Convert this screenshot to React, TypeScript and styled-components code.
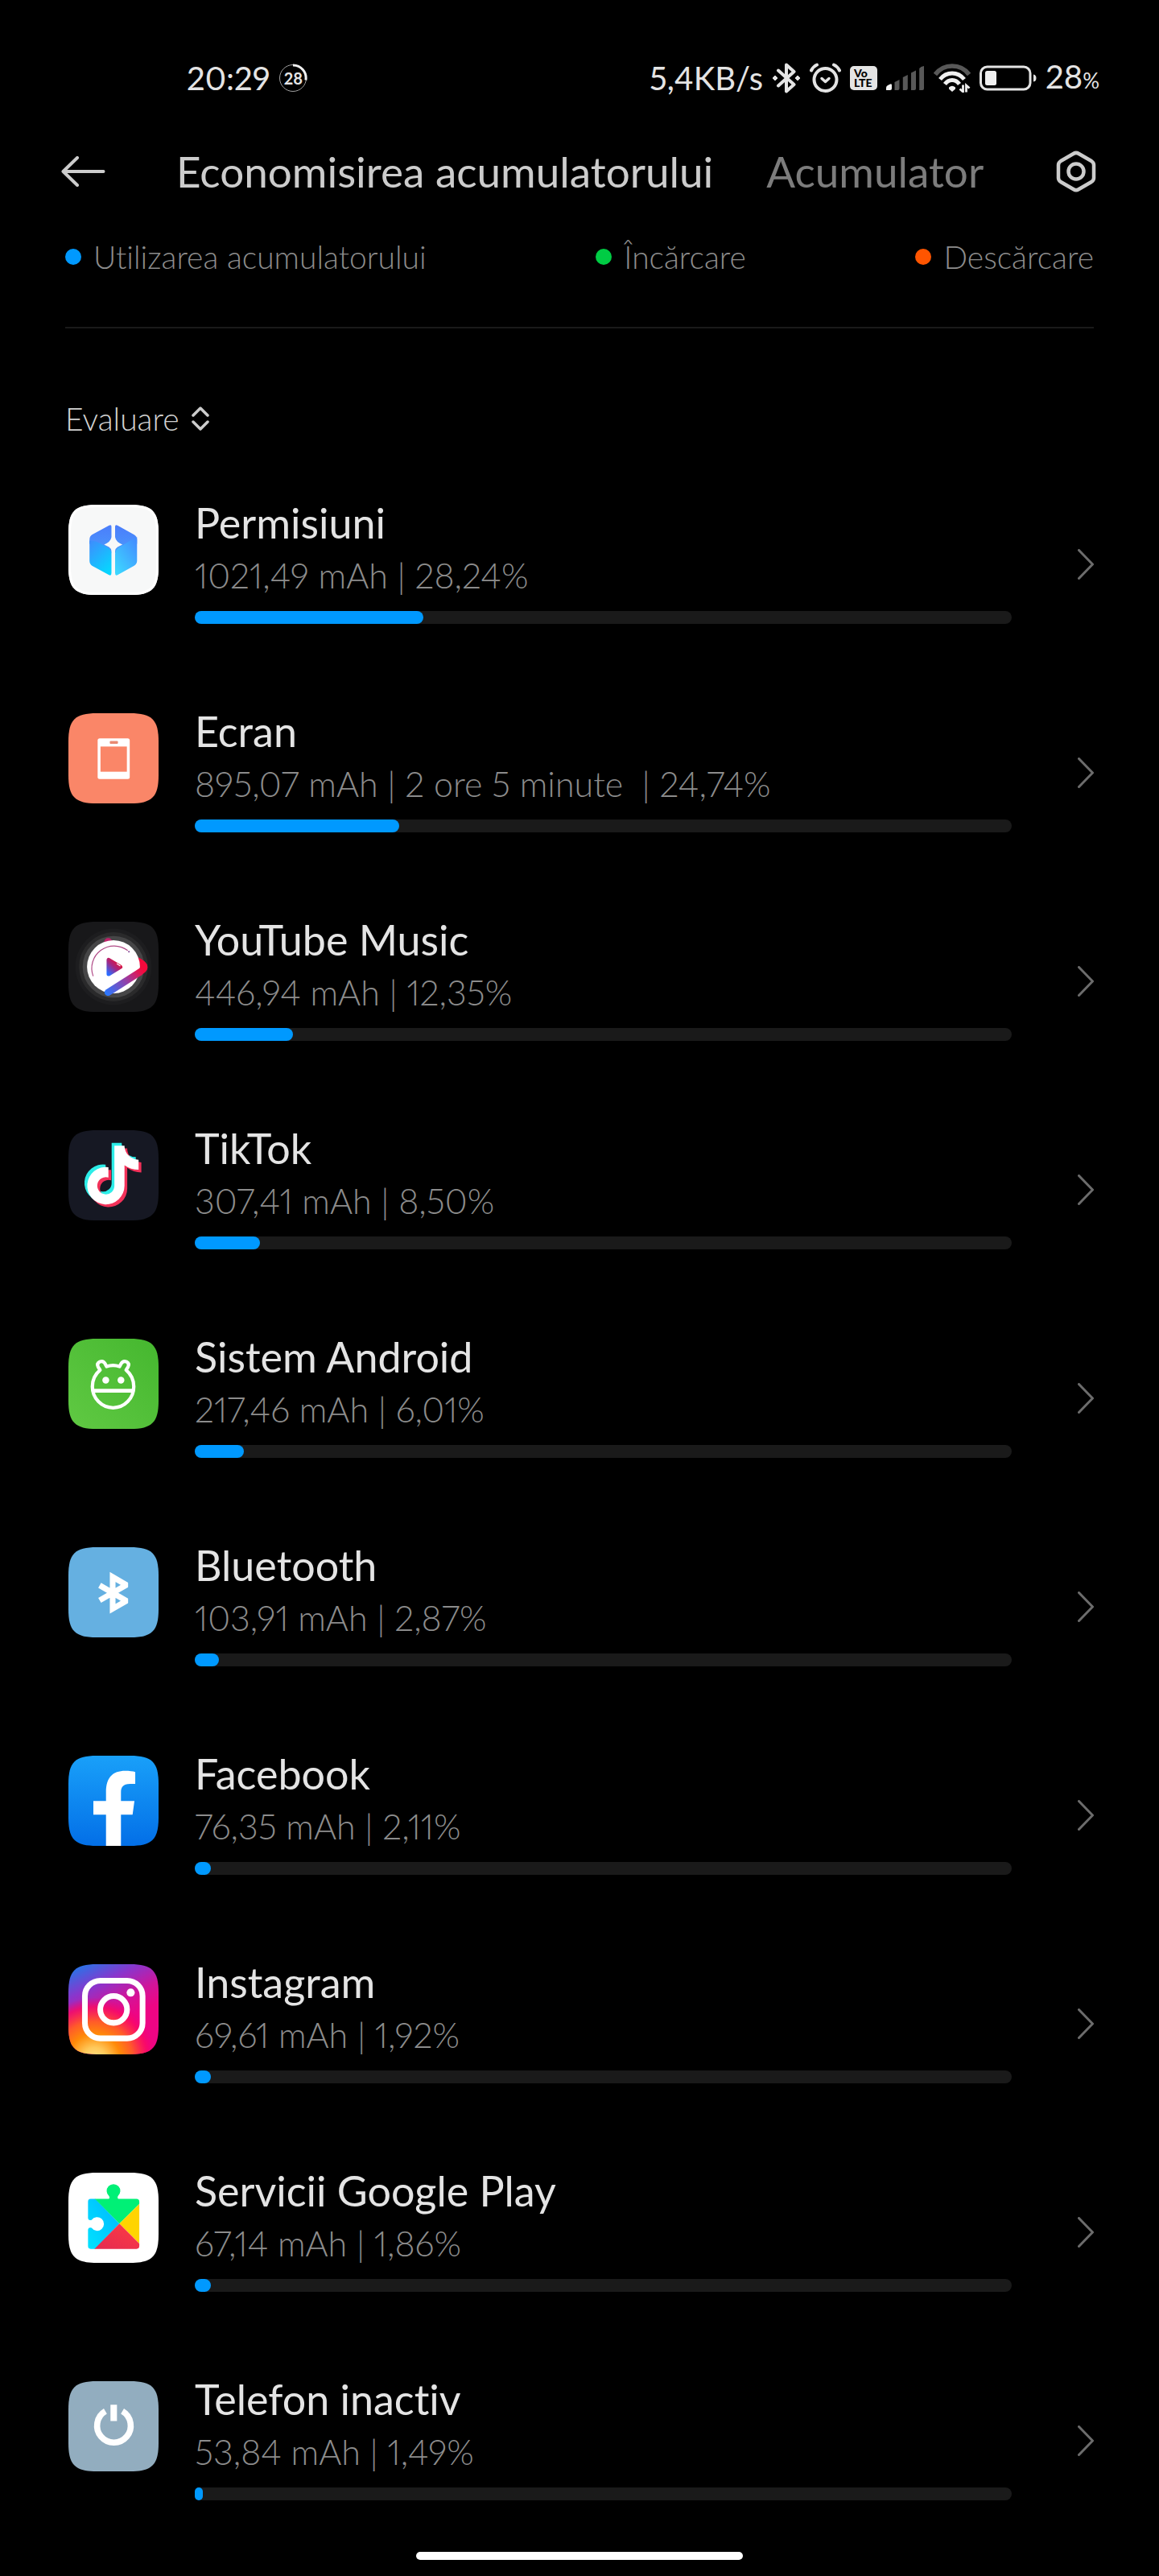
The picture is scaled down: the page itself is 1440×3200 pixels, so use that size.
import React, { ReactNode } from 'react';
import styled, { createGlobalStyle } from 'styled-components';

const GlobalStyle = createGlobalStyle`
  * { box-sizing: border-box; }
  body {
    margin: 0;
    background: #000;
    color: #e4e4e4;
    font-family: Lato, "Open Sans", sans-serif;
    font-variant-ligatures: none;
    font-variant-numeric: proportional-nums;
  }
  button, a { color: inherit; font: inherit; text-decoration: none; }
  button { padding: 0; border: 0; background: none; cursor: pointer; }
  svg { display: block; flex: none; }
`;

const Screen = styled.div`
  display: flex;
  flex-direction: column;
  min-height: 100vh;
  background: #000;
`;

const StatusBar = styled.div`
  display: flex;
  align-items: center;
  justify-content: space-between;
  height: 144px;
  padding: 50px 74px 0 232px;
  font-size: 40px;
  line-height: 48px;
`;

const StatusGroup = styled.div`
  display: flex;
  align-items: center;
  gap: 11px;
  white-space: nowrap;
`;

const Ring = styled.span`
  display: grid;
  place-items: center;
  font-size: 20px;
  line-height: 24px;
  font-weight: 700;
  > * { grid-area: 1 / 1; }
`;

const Level = styled.span`
  small { font-size: 26px; }
`;

const Header = styled.header`
  display: flex;
  align-items: center;
  height: 138px;
  padding: 0 78px 0 76px;
`;

const Tabs = styled.div`
  display: flex;
  flex: 1;
  gap: 66px;
  margin-left: 88px;
`;

const Tab = styled.button<{ $active?: boolean }>`
  font-size: 53px;
  line-height: 64px;
  white-space: nowrap;
  color: ${(p) => (p.$active ? '#cccccc' : '#7c7c7c')};
`;

const Main = styled.main`
  display: flex;
  flex-direction: column;
  padding: 13px 81px 0;
`;

const Legend = styled.ul`
  display: flex;
  justify-content: space-between;
  margin: 0;
  padding: 0 0 63px;
  border-bottom: 2px solid #1a1a1a;
  list-style: none;
  font-size: 39px;
  line-height: 48px;
  font-weight: 300;
  color: #8c8c8c;
`;

const LegendItem = styled.li`
  display: flex;
  align-items: center;
  gap: 15px;
`;

const Dot = styled.span<{ $color: string }>`
  width: 20px;
  height: 20px;
  border-radius: 50%;
  background: ${(p) => p.$color};
`;

const SortButton = styled.button`
  display: flex;
  align-items: center;
  align-self: flex-start;
  gap: 15px;
  margin: 88px 0 83px;
  font-size: 39px;
  line-height: 48px;
  font-weight: 300;
  color: #d2d2d2;
`;

const AppList = styled.ul`
  display: flex;
  flex-direction: column;
  gap: 111px;
  margin: 0;
  padding: 0;
  list-style: none;
`;

const AppRow = styled.a`
  display: flex;
  align-items: center;
  padding-left: 4px;
`;

const IconBox = styled.span`
  align-self: flex-start;
  margin-right: 45px;
`;

const Details = styled.div`
  display: flex;
  flex: 1;
  flex-direction: column;
  gap: 18px;
  margin-right: 82px;
`;

const Name = styled.span`
  font-size: 52px;
  line-height: 44px;
`;

const Usage = styled.span`
  font-size: 43px;
  line-height: 52px;
  font-weight: 300;
  color: #8c8c8c;
  white-space: pre;
`;

const Track = styled.div`
  height: 16px;
  border-radius: 8px;
  background: #1a1a1a;
`;

const Fill = styled.div`
  height: 16px;
  border-radius: 8px;
  background: #0099ff;
`;

const HomeBar = styled.div`
  align-self: center;
  width: 28.2%;
  height: 10px;
  margin: 64px 0 20px;
  border-radius: 5px;
  background: #fff;
`;

const SQUIRCLE =
  'M0 35C0 8 8 0 35 0H76C103 0 111 8 111 35V76C111 103 103 111 76 111H35C8 111 0 103 0 76Z';

const Squircle = ({ id, fill, children }: { id: string; fill: string; children: ReactNode }) => (
  <svg width="112" height="112" viewBox="0 0 111 111" aria-hidden="true">
    <clipPath id={`${id}-clip`}>
      <path d={SQUIRCLE} />
    </clipPath>
    <g clipPath={`url(#${id}-clip)`}>
      <rect width="111" height="111" fill={fill} />
      {children}
    </g>
  </svg>
);

const PermissionsIcon = () => (
  <Squircle id="perm" fill="#f7f8f8">
    <defs>
      <linearGradient id="permTop" x1="0" y1="0" x2="0" y2="1">
        <stop offset="0" stopColor="#4b7dfb" />
        <stop offset="1" stopColor="#4a9afc" />
      </linearGradient>
      <linearGradient id="permLeft" x1="0" y1="0" x2="0.6" y2="1">
        <stop offset="0" stopColor="#3f8bfd" />
        <stop offset="1" stopColor="#08d4ff" />
      </linearGradient>
      <linearGradient id="permRight" x1="1" y1="0" x2="0.2" y2="1">
        <stop offset="0" stopColor="#4488ff" />
        <stop offset="1" stopColor="#3cd6ff" />
      </linearGradient>
    </defs>
    <path d={SQUIRCLE} fill="none" stroke="#fff" strokeWidth="6" />
    <path d="M53 27Q53 24 50 25.500L29 37Q26 39 26 43V48L53 60V57Q53 54 50 52L44 49Q52 46 53 40Z" fill="url(#permTop)" />
    <path d="M57.500 27Q57.500 24 60.500 25.500L81 37Q84.500 39 84.500 43V48L57.500 60V57Q57.500 54 60.500 52L66.500 49Q58.500 46 57.500 40Z" fill="url(#permTop)" />
    <path d="M26 44Q33 44 38 47L49 53Q53 56 53 61V84Q53 88 50 86.500L29 75Q26 73 26 69Z" fill="url(#permLeft)" />
    <path d="M84.500 40Q79 42 73 46L61.500 53Q57.500 56 57.500 61V84Q57.500 88 60.500 86.500L81 75Q84.500 73 84.500 69Z" fill="url(#permRight)" />
  </Squircle>
);

const DisplayIcon = () => (
  <Squircle id="disp" fill="#fa8668">
    <rect x="36" y="31" width="39.500" height="50" rx="2.500" fill="#fff" />
    <rect x="39.500" y="41" width="32.500" height="31" fill="#fa8668" />
    <rect x="51" y="34.300" width="10" height="3.400" rx="1" fill="#e98a72" />
  </Squircle>
);

const MusicIcon = () => (
  <Squircle id="music" fill="#18181a">
    <defs>
      <linearGradient id="musicBand" gradientUnits="userSpaceOnUse" x1="46" y1="88" x2="92" y2="52">
        <stop offset="0" stopColor="#2b78ff" />
        <stop offset="0.500" stopColor="#9340a8" />
        <stop offset="0.850" stopColor="#e8114c" />
        <stop offset="1" stopColor="#fb0638" />
      </linearGradient>
      <linearGradient id="musicPlay" x1="0" y1="1" x2="0.700" y2="0.100">
        <stop offset="0" stopColor="#2b6cff" />
        <stop offset="0.600" stopColor="#a5257f" />
        <stop offset="1" stopColor="#dc1541" />
      </linearGradient>
    </defs>
    <circle cx="55.500" cy="55.500" r="47" fill="#1d1d1f" />
    <circle cx="55.500" cy="55.500" r="42.500" fill="#2a2a2b" />
    <circle cx="55.500" cy="55.500" r="38" fill="#464647" />
    <circle cx="49" cy="25" r="5" fill="#c0216a" />
    <path d="M83 47L90 51.500Q97 56 90 60.500L84 64" fill="none" stroke="#f20a3e" strokeWidth="8" />
    <circle cx="55.500" cy="55.500" r="32.600" fill="#fff" />
    <path d="M87 44L93.500 48.500Q101 55.500 93.500 62.500L86 67L84 60Q88 58 89 55Q89 50 87 44Z" fill="#f50a3c" />
    <path d="M48.700 87L88 62" fill="none" stroke="url(#musicBand)" strokeWidth="8.500" strokeLinecap="round" />
    <path d="M30.500 67A27.500 27.500 0 0 1 73 35.500" fill="none" stroke="#b04a86" strokeWidth="1.200" />
    <circle cx="74.500" cy="37" r="1" fill="#7a3d90" />
    <path d="M49.500 47V64.500L64 55.700Z" fill="url(#musicPlay)" stroke="url(#musicPlay)" strokeWidth="5" strokeLinejoin="round" />
    <path d="M59.500 51.500L64 54.500" stroke="#fff" strokeWidth="1" />
  </Squircle>
);

const NOTE =
  'M448,209.910a210.060,210.060,0,0,1-122.770-39.250V349.380A162.550,162.550,0,1,1,185,188.310V278.200a74.620,74.620,0,1,0,52.230,71.180V0l88,0a121.180,121.180,0,0,0,1.860,22.170h0A122.180,122.180,0,0,0,381,102.390a121.430,121.430,0,0,0,67,20.140Z';

const TikTokIcon = () => (
  <Squircle id="tiktok" fill="#161823">
    <path d={NOTE} transform="translate(19.700 15.700) scale(.1413)" fill="#2dede8" />
    <path d={NOTE} transform="translate(26.500 22.300) scale(.1413)" fill="#f23159" />
    <path d={NOTE} transform="translate(23.100 19) scale(.1413)" fill="#fff" />
  </Squircle>
);

const AndroidIcon = () => (
  <Squircle id="android" fill="url(#androidBg)">
    <defs>
      <linearGradient id="androidBg" x1="0" y1="1" x2="1" y2="0">
        <stop offset="0" stopColor="#60c943" />
        <stop offset="1" stopColor="#45b72f" />
      </linearGradient>
    </defs>
    <g fill="none" stroke="#fff" strokeWidth="4.200" strokeLinejoin="round">
      <path d="M39 38.500L36.600 34.800Q34.500 30.500 38.600 28.400Q42.800 26.600 45 30.500L47 34.300Q55 31.500 63 34.300L65 30.500Q67.500 26.600 71.600 28.400Q75.500 30.500 73.400 34.800L71 38.500Q80.500 46.500 80.500 59A25.500 26 0 0 1 29.500 59Q29.500 46.500 39 38.500Z" />
      <path d="M30 64H80" strokeWidth="4.800" />
    </g>
    <circle cx="46" cy="51" r="4.200" fill="#fff" />
    <circle cx="64.700" cy="51" r="4.200" fill="#fff" />
  </Squircle>
);

const BluetoothIcon = () => (
  <Squircle id="bt" fill="#65b0e1">
    <svg width="73.500" height="111">
      <path
        d="M38.500 47L71.500 66L54.500 75.800V36.600L71.500 46.400L38.500 65.400"
        fill="none"
        stroke="#fff"
        strokeWidth="7"
        strokeMiterlimit="8"
      />
    </svg>
  </Squircle>
);

const FacebookIcon = () => (
  <Squircle id="fb" fill="url(#fbBg)">
    <defs>
      <linearGradient id="fbBg" x1="0" y1="0" x2="0" y2="1">
        <stop offset="0" stopColor="#19a0f9" />
        <stop offset="1" stopColor="#036fe7" />
      </linearGradient>
    </defs>
    <path
      d="M46.300 111V72.700H30.700V55.700H46.300V45C46.300 27 54.500 18.700 70 18.700C75 18.700 79.500 19.300 82.300 20V34.700H76C67 34.700 64.700 39 64.700 45V55.700H81.300L79 72.700H64.700V111Z"
      fill="#fff"
    />
  </Squircle>
);

const InstagramIcon = () => (
  <Squircle id="ig" fill="url(#igBase)">
    <defs>
      <linearGradient id="igBase" gradientUnits="userSpaceOnUse" x1="26" y1="-2" x2="62" y2="72">
        <stop offset="0" stopColor="#2f6fe6" />
        <stop offset="0.350" stopColor="#8a35cc" />
        <stop offset="0.700" stopColor="#d0159a" />
        <stop offset="1" stopColor="#ee0584" />
      </linearGradient>
      <radialGradient id="igWarm" gradientUnits="userSpaceOnUse" cx="32" cy="118" r="77">
        <stop offset="0" stopColor="#ffe389" />
        <stop offset="0.200" stopColor="#ffc95a" />
        <stop offset="0.420" stopColor="#ff8a08" />
        <stop offset="0.620" stopColor="#ff5a2a" />
        <stop offset="0.850" stopColor="#fb0a62" stopOpacity="0.800" />
        <stop offset="1" stopColor="#f00078" stopOpacity="0" />
      </radialGradient>
    </defs>
    <rect width="111" height="111" fill="url(#igWarm)" />
    <g fill="none" stroke="#fff" strokeWidth="7">
      <rect x="20.300" y="20.300" width="71" height="71" rx="19" />
      <circle cx="55.700" cy="55.700" r="16.500" />
    </g>
    <circle cx="76.700" cy="35" r="5" fill="#fff" />
  </Squircle>
);

const PlayServicesIcon = () => (
  <Squircle id="gps" fill="#fff">
    <defs>
      <clipPath id="gpsBody">
        <rect x="24" y="32.300" width="63.300" height="61.500" rx="3.500" />
      </clipPath>
      <linearGradient id="gpsBlue" x1="1" y1="0" x2="0" y2="1">
        <stop offset="0" stopColor="#00b4ff" />
        <stop offset="1" stopColor="#00e4ff" />
      </linearGradient>
      <linearGradient id="gpsRed" x1="1" y1="0" x2="0" y2="1">
        <stop offset="0" stopColor="#ff3c42" />
        <stop offset="1" stopColor="#e32a52" />
      </linearGradient>
    </defs>
    <g clipPath="url(#gpsBody)">
      <path d="M24 30H31L62.800 62.700L31 96H24Z" fill="url(#gpsBlue)" />
      <path d="M30.500 30H96L62.800 62.700Z" fill="#00f076" />
      <path d="M88 38V88L62.800 62.700Z" fill="#ffd400" />
      <path d="M30.500 95.500L62.800 62.700L94 94V96Z" fill="url(#gpsRed)" />
    </g>
    <path d="M49 33Q51.500 31.500 50 28.800A8.400 8.400 0 1 1 61 28.800Q59.700 31.500 62.200 33Z" fill="#00f076" />
    <path d="M23.800 56Q25 59.500 28.500 58.200A8.400 8.400 0 1 1 28.500 68Q25 67 23.800 70Z" fill="#fff" />
  </Squircle>
);

const IdleIcon = () => (
  <Squircle id="idle" fill="#92adbf">
    <g fill="none" stroke="#fff">
      <path d="M45.500 37A20.700 20.700 0 1 0 66.500 37" strokeWidth="7.500" />
      <path d="M55.800 29V49" strokeWidth="8" />
    </g>
  </Squircle>
);

const Chevron = () => (
  <svg width="20" height="38" viewBox="0 0 20 38" fill="none" aria-hidden="true">
    <path d="M1.500 1.500L18.500 19L1.500 36.500" stroke="#6c6c6c" strokeWidth="3" strokeLinecap="round" strokeLinejoin="round" />
  </svg>
);

interface AppUsage {
  name: string;
  usage: string;
  percent: number;
  icon: ReactNode;
}

const apps: AppUsage[] = [
  { name: 'Permisiuni', usage: '1021,49 mAh | 28,24%', percent: 28, icon: <PermissionsIcon /> },
  { name: 'Ecran', usage: '895,07 mAh | 2 ore 5 minute  | 24,74%', percent: 25, icon: <DisplayIcon /> },
  { name: 'YouTube Music', usage: '446,94 mAh | 12,35%', percent: 12, icon: <MusicIcon /> },
  { name: 'TikTok', usage: '307,41 mAh | 8,50%', percent: 8, icon: <TikTokIcon /> },
  { name: 'Sistem Android', usage: '217,46 mAh | 6,01%', percent: 6, icon: <AndroidIcon /> },
  { name: 'Bluetooth', usage: '103,91 mAh | 2,87%', percent: 3, icon: <BluetoothIcon /> },
  { name: 'Facebook', usage: '76,35 mAh | 2,11%', percent: 2, icon: <FacebookIcon /> },
  { name: 'Instagram', usage: '69,61 mAh | 1,92%', percent: 2, icon: <InstagramIcon /> },
  { name: 'Servicii Google Play', usage: '67,14 mAh | 1,86%', percent: 2, icon: <PlayServicesIcon /> },
  { name: 'Telefon inactiv', usage: '53,84 mAh | 1,49%', percent: 1, icon: <IdleIcon /> },
];

const VoLte = styled.span`
  display: flex;
  flex-direction: column;
  justify-content: center;
  width: 34px;
  height: 30px;
  padding-left: 5px;
  border-radius: 5px;
  background: #e4e4e4;
  color: #000;
  font-size: 14px;
  line-height: 12px;
  font-weight: 900;
`;

const StatusIcons = () => (
  <>
    <svg width="36" height="38" viewBox="0 0 36 38" fill="none" aria-hidden="true">
      <path d="M8 9.500L27.500 27L18 35.500V2.500L27.500 11L8 28.500" stroke="#e4e4e4" strokeWidth="4" strokeLinejoin="round" strokeLinecap="round" />
      <path d="M4 16L7 19L4 22L1 19ZM32 16L35 19L32 22L29 19Z" fill="#e4e4e4" stroke="#e4e4e4" strokeLinejoin="round" />
    </svg>
    <svg width="39" height="38" viewBox="0 0 39 38" fill="none" stroke="#e4e4e4" strokeLinecap="round" aria-hidden="true">
      <circle cx="19.500" cy="21" r="14" strokeWidth="4" />
      <path d="M2 9.500Q4.500 4.500 9 2.500M37 9.500Q34.500 4.500 30 2.500" strokeWidth="4" />
      <path d="M15 19.500L19.500 23.500L24 19.500" strokeWidth="3.500" strokeLinejoin="round" />
    </svg>
    <VoLte>
      <span>Vo</span>
      <span>LTE</span>
    </VoLte>
    <svg width="48" height="30" viewBox="0 0 48 30" aria-hidden="true">
      <path d="M0 30V27Q0 25 2 24L5 22.500Q7 21.500 7 24V28Q7 30 5 30Z" fill="#f4f4f4" />
      <g fill="#585858">
        <path d="M10.500 30V20L16.500 17V28Q16.500 30 14.500 30Z" />
        <path d="M20.800 30V14L26.800 11V28Q26.800 30 24.800 30Z" />
        <path d="M31 30V8.500L37 5.500V28Q37 30 35 30Z" />
        <path d="M41.200 30V3Q43 .5 47 0V28Q47 30 45 30Z" />
      </g>
    </svg>
    <svg width="46" height="36" viewBox="0 0 46 36" fill="none" aria-hidden="true">
      <path d="M2 13.500Q10 3 23 3Q36 3 44 13.500" stroke="#585858" strokeWidth="5.500" />
      <g stroke="#f0f0f0" strokeWidth="5">
        <path d="M8 19.500Q14 12 23 12Q32 12 38 19.500" />
        <path d="M14 25.500Q17.500 20.500 23 20.500Q28.500 20.500 32 25.500" />
      </g>
      <path d="M19 29.500Q23 26 27 29.500V31.500L23 35L19 31.500Z" fill="#f0f0f0" />
      <path d="M36.500 26.500V35L32.500 31.500M40.500 35.500V27L44.500 30.500" stroke="#f0f0f0" strokeWidth="2.800" />
    </svg>
    <svg width="71" height="32" viewBox="0 0 71 32" fill="none" aria-hidden="true">
      <rect x="1.500" y="2" width="61.500" height="28" rx="8" stroke="#e4e4e4" strokeWidth="3" />
      <rect x="7" y="7" width="14" height="18" rx="2.500" fill="#f0f0f0" />
      <path d="M67 11.500Q70.500 12 70.500 16Q70.500 20 67 20.500Z" fill="#e4e4e4" />
    </svg>
  </>
);

export default function App() {
  return (
    <Screen>
      <GlobalStyle />
      <StatusBar>
        <StatusGroup>
          <span>20:29</span>
          <Ring>
            <svg width="36" height="36" viewBox="0 0 36 36" fill="none" aria-hidden="true">
              <circle cx="18" cy="18" r="16.500" stroke="#a0a0a0" strokeWidth="1" />
              <path d="M18 2A16 16 0 0 1 33.900 20.500" stroke="#f0f0f0" strokeWidth="3" />
            </svg>
            <span>28</span>
          </Ring>
        </StatusGroup>
        <StatusGroup>
          <span>5,4KB/s</span>
          <StatusIcons />
          <Level>
            28<small>%</small>
          </Level>
        </StatusGroup>
      </StatusBar>

      <Header>
        <button type="button" aria-label="Înapoi">
          <svg width="55" height="38" viewBox="0 0 55 38" fill="none" stroke="#ccc" strokeWidth="4" strokeLinecap="round" strokeLinejoin="round" aria-hidden="true">
            <path d="M20 2L2.500 19L20 36M2.500 19H52.500" />
          </svg>
        </button>
        <Tabs role="tablist">
          <Tab type="button" role="tab" aria-selected="true" $active>
            Economisirea acumulatorului
          </Tab>
          <Tab type="button" role="tab" aria-selected="false">
            Acumulator
          </Tab>
        </Tabs>
        <button type="button" aria-label="Setări">
          <svg width="50" height="52" viewBox="0 0 50 52" fill="none" stroke="#ccc" strokeWidth="4.500" strokeLinejoin="round" aria-hidden="true">
            <path d="M22 3.800Q25 2 28 3.800L44 13Q47 15 47 18V34Q47 37 44 39L28 48.200Q25 50 22 48.200L6 39Q3 37 3 34V18Q3 15 6 13Z" />
            <circle cx="25" cy="26" r="9.500" />
          </svg>
        </button>
      </Header>

      <Main>
        <Legend>
          <LegendItem>
            <Dot $color="#0099ff" />
            Utilizarea acumulatorului
          </LegendItem>
          <LegendItem>
            <Dot $color="#00cc44" />
            Încărcare
          </LegendItem>
          <LegendItem>
            <Dot $color="#ff5500" />
            Descărcare
          </LegendItem>
        </Legend>

        <SortButton type="button">
          Evaluare
          <svg width="22" height="30" viewBox="0 0 22 30" fill="none" stroke="#ccc" strokeWidth="3.500" strokeLinecap="round" strokeLinejoin="round" aria-hidden="true">
            <path d="M2 11L11 2L20 11M2 19L11 28L20 19" />
          </svg>
        </SortButton>

        <AppList>
          {apps.map((app) => (
            <li key={app.name}>
              <AppRow href="#">
                <IconBox>{app.icon}</IconBox>
                <Details>
                  <Name>{app.name}</Name>
                  <Usage>{app.usage}</Usage>
                  <Track>
                    <Fill style={{ width: `${app.percent}%` }} />
                  </Track>
                </Details>
                <Chevron />
              </AppRow>
            </li>
          ))}
        </AppList>
      </Main>
      <HomeBar />
    </Screen>
  );
}
